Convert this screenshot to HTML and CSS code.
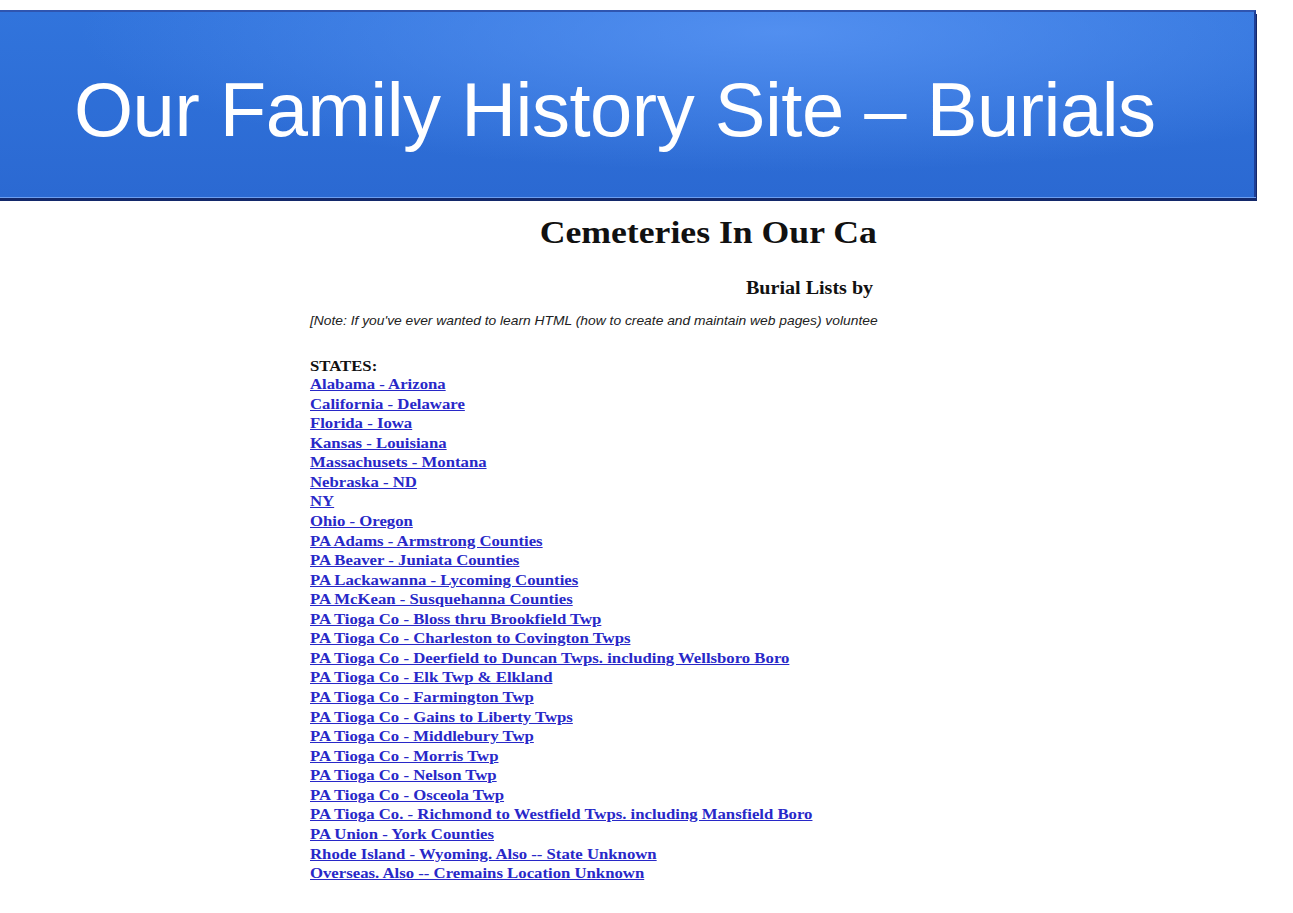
FILE: index.html
```html
<!DOCTYPE html>
<html>
<head>
<meta charset="utf-8">
<link rel="stylesheet" href="styles.css">
</head>
<body>
<header class="banner">
  <h1 class="banner-title">Our Family History Site – Burials</h1>
</header>
<main class="page">
  <div class="shot">
    <div class="shot-inner">
      <h2 class="shot-title">Cemeteries In Our Ca</h2>
      <h3 class="shot-sub">Burial Lists by</h3>
      <p class="note">[Note: If you've ever wanted to learn HTML (how to create and maintain web pages) voluntee</p>
      <div class="states">
        <div class="states-label">STATES:</div>
        <a href="#">Alabama - Arizona</a>
        <a href="#">California - Delaware</a>
        <a href="#">Florida - Iowa</a>
        <a href="#">Kansas - Louisiana</a>
        <a href="#">Massachusets - Montana</a>
        <a href="#">Nebraska - ND</a>
        <a href="#">NY</a>
        <a href="#">Ohio - Oregon</a>
        <a href="#">PA Adams - Armstrong Counties</a>
        <a href="#">PA Beaver - Juniata Counties</a>
        <a href="#">PA Lackawanna - Lycoming Counties</a>
        <a href="#">PA McKean - Susquehanna Counties</a>
        <a href="#">PA Tioga Co - Bloss thru Brookfield Twp</a>
        <a href="#">PA Tioga Co - Charleston to Covington Twps</a>
        <a href="#">PA Tioga Co - Deerfield to Duncan Twps. including Wellsboro Boro</a>
        <a href="#">PA Tioga Co - Elk Twp &amp; Elkland</a>
        <a href="#">PA Tioga Co - Farmington Twp</a>
        <a href="#">PA Tioga Co - Gains to Liberty Twps</a>
        <a href="#">PA Tioga Co - Middlebury Twp</a>
        <a href="#">PA Tioga Co - Morris Twp</a>
        <a href="#">PA Tioga Co - Nelson Twp</a>
        <a href="#">PA Tioga Co - Osceola Twp</a>
        <a href="#">PA Tioga Co. - Richmond to Westfield Twps. including Mansfield Boro</a>
        <a href="#">PA Union - York Counties</a>
        <a href="#">Rhode Island - Wyoming. Also -- State Unknown</a>
        <a href="#">Overseas. Also -- Cremains Location Unknown</a>
      </div>
    </div>
  </div>
</main>
</body>
</html>
```

FILE: styles.css
```css
html, body {
  margin: 0;
  padding: 0;
  background: #ffffff;
}

.banner {
  margin-top: 10px;
  width: 1256px;
  height: 187px;
  box-sizing: border-box;
  border-top: 2px solid #2f55b0;
  border-right: 2px solid #1f3f95;
  background:
    radial-gradient(ellipse 700px 140px at 780px 20px, rgba(90,150,245,0.8), rgba(90,150,245,0) 100%),
    linear-gradient(#3174dc, #2b69d2);
  box-shadow: 0 1px 0 #6d9ef0, 0 4px 0 #13286a, 1px 4px 0 #13286a;
  display: flex;
  align-items: center;
  padding-left: 74px;
}

.banner-title {
  margin: 0;
  font-family: "Liberation Sans", Arial, sans-serif;
  font-weight: normal;
  font-size: 76px;
  color: #ffffff;
  letter-spacing: -0.5px;
  white-space: nowrap;
  padding-top: 10px;
}

.page {
  padding-left: 310px;
  padding-top: 17px;
}

.shot {
  width: 570px;
}

.shot-inner {
  transform: scaleX(1.115);
  transform-origin: 0 0;
  font-family: "Liberation Serif", "Times New Roman", serif;
  color: #111111;
}

.shot-title {
  margin: 0;
  padding-left: 206px;
  font-size: 32px;
  font-weight: bold;
  white-space: nowrap;
  line-height: 36px;
}

.shot-sub {
  margin: 0;
  padding-left: 391px;
  padding-top: 27px;
  font-size: 18px;
  font-weight: bold;
  white-space: nowrap;
  line-height: 22px;
}

.note {
  margin: 0;
  padding-top: 15px;
  font-family: "Liberation Sans", Arial, sans-serif;
  font-style: italic;
  font-size: 12.4px;
  white-space: nowrap;
  color: #222222;
  line-height: 15px;
}

.states {
  padding-top: 28px;
  display: flex;
  flex-direction: column;
  align-items: flex-start;
  font-weight: bold;
  font-size: 15px;
  line-height: 19.56px;
}

.states-label {
  color: #111111;
  line-height: 18px;
}

.states a {
  color: #2828c8;
  text-decoration: underline;
  white-space: nowrap;
}
```
